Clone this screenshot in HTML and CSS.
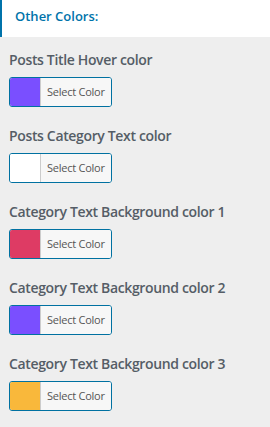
FILE: index.html
```html
<!DOCTYPE html>
<html lang="en">
<head>
    <meta charset="UTF-8">
    <title>Other Colors</title>
    <link rel="stylesheet" href="styles.css">
</head>
<body>
    <div class="section-head">
        <h3>Other Colors:</h3>
    </div>
    <ul class="controls">
        <li class="control">
            <span class="control-title">Posts Title Hover color</span>
            <button class="color-result" type="button">
                <span class="swatch" style="background: #7a4fff"></span>
                <span class="result-text">Select Color</span>
            </button>
        </li>
        <li class="control">
            <span class="control-title">Posts Category Text color</span>
            <button class="color-result" type="button">
                <span class="swatch" style="background: #ffffff"></span>
                <span class="result-text">Select Color</span>
            </button>
        </li>
        <li class="control">
            <span class="control-title">Category Text Background color 1</span>
            <button class="color-result" type="button">
                <span class="swatch" style="background: #de3b64"></span>
                <span class="result-text">Select Color</span>
            </button>
        </li>
        <li class="control">
            <span class="control-title">Category Text Background color 2</span>
            <button class="color-result" type="button">
                <span class="swatch" style="background: #7a4fff"></span>
                <span class="result-text">Select Color</span>
            </button>
        </li>
        <li class="control">
            <span class="control-title">Category Text Background color 3</span>
            <button class="color-result" type="button">
                <span class="swatch" style="background: #f9b83b"></span>
                <span class="result-text">Select Color</span>
            </button>
        </li>
    </ul>
</body>
</html>
```
FILE: styles.css
```css
body {
    font-family: "Open Sans", Arial, sans-serif;
    background: #eeeeee;
    margin: 0;
    padding: 0;
}
.section-head {
    background: #fff;
    border-left: 2px solid #0073aa;
    height: 37px;
    padding-left: 13px;
    box-sizing: border-box;
}
.section-head h3 {
    margin: 0;
    padding-top: 6px;
    font-size: 13px;
    line-height: 20px;
    font-weight: 600;
    color: #0073aa;
}
.controls {
    list-style: none;
    margin: 0;
    padding: 11px 0 0 9px;
}
.control {
    display: flex;
    flex-direction: column;
    align-items: flex-start;
    gap: 5px;
    margin-bottom: 17px;
}
.control-title {
    font-size: 14px;
    line-height: 24px;
    font-weight: 600;
    letter-spacing: -0.35px;
    color: #555d66;
}
.color-result {
    display: flex;
    height: 30px;
    margin: 0;
    padding: 0;
    border: 1px solid #0071a1;
    border-radius: 3px;
    background: #f7f7f7;
    overflow: hidden;
    font-family: inherit;
    cursor: pointer;
}
.swatch {
    width: 30px;
}
.result-text {
    border-left: 1px solid #ccc;
    background: #f7f7f7;
    color: #555;
    font-size: 11px;
    line-height: 28px;
    letter-spacing: -0.25px;
    padding: 0 6px;
}
```
